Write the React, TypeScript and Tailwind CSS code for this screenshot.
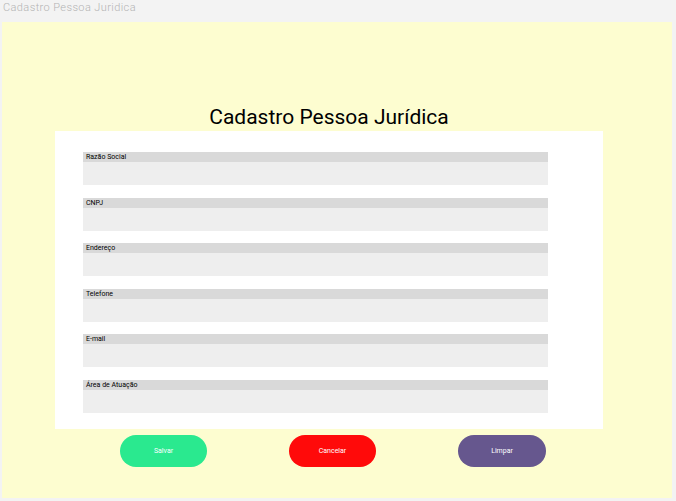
import React from "react";

const fields = ["Razão Social", "CNPJ", "Endereço", "Telefone", "E-mail", "Área de Atuação"];

export default function App() {
  return (
    <div className="w-[676px] h-[501px] bg-[#f3f3f3] overflow-hidden" style={{ fontFamily: "Roboto, 'Liberation Sans', sans-serif" }}>
      <div className="h-[22px] pl-[3px] text-[11px] leading-[16px] font-light text-[#b4b4b4] tracking-[0.4px]">
        Cadastro Pessoa Juridica
      </div>
      <div className="ml-[2px] w-[670px] h-[476px] bg-[#fdfdd0] pt-[82px]">
        <div className="ml-[53px] w-[548px]">
          <h1 className="text-center text-[21px] leading-[27px] text-black font-normal">Cadastro Pessoa Jurídica</h1>
          <div className="bg-white h-[298px] pt-[21px] pl-[28px]">
            {fields.map((f) => (
              <div key={f} className="h-[45.6px] w-[465px]">
                <div className="h-[10px] bg-[#d9d9d9] text-[7px] leading-[10px] font-normal text-black pl-[3px]">{f}</div>
                <div className="h-[23px] bg-[#eeeeee]"></div>
              </div>
            ))}
          </div>
        </div>
        <div className="flex mt-[6px] ml-[118px] gap-[82px]">
          <button className="w-[87px] h-[32px] rounded-full bg-[#2ae98f] text-white text-[7px] font-normal">Salvar</button>
          <button className="w-[87px] h-[32px] rounded-full bg-[#ff0a0a] text-white text-[7px] font-normal">Cancelar</button>
          <button className="w-[88px] h-[32px] rounded-full bg-[#66578e] text-white text-[7px] font-normal">Limpar</button>
        </div>
      </div>
    </div>
  );
}
